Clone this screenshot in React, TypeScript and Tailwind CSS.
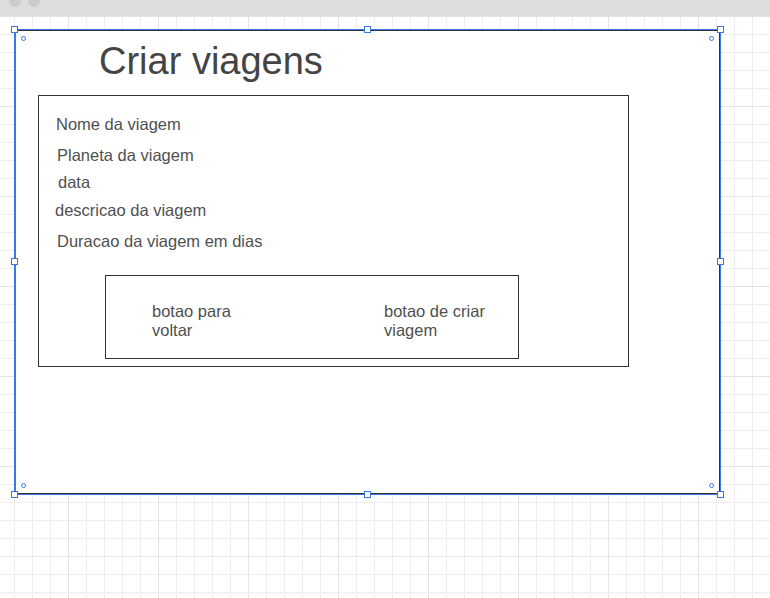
import React from "react";

const Handle = ({ className }: { className: string }) => (
  <div className={`absolute w-[7px] h-[7px] bg-white border border-[#3b78e7] ${className}`} />
);

const Rot = ({ className }: { className: string }) => (
  <div className={`absolute w-[5px] h-[5px] rounded-full bg-white border border-[#3b78e7] ${className}`} />
);

export default function App() {
  return (
    <div className="w-[770px] h-[598px] overflow-hidden bg-white font-['Liberation_Sans',Arial,sans-serif]">
      {/* top bar */}
      <div className="h-[16px] bg-[#dddddd] relative overflow-hidden flex gap-[7px] pl-[9px]">
        <div className="w-[12px] h-[12px] rounded-full bg-[#cccccc] -mt-[5px]" />
        <div className="w-[12px] h-[12px] rounded-full bg-[#cccccc] -mt-[5px]" />
      </div>
      {/* canvas */}
      <div className="h-[582px] pt-[13px] pl-[14px] bg-[image:linear-gradient(to_right,#e3e3e3_1px,transparent_1px),linear-gradient(to_bottom,#e3e3e3_1px,transparent_1px),linear-gradient(to_right,#eeeeee_1px,transparent_1px),linear-gradient(to_bottom,#eeeeee_1px,transparent_1px)] bg-[size:90px_90px,90px_90px,18px_18px,18px_18px] bg-[position:68px_0,0_0,14px_0,0_0]">
        <div className="relative w-[707px] h-[466px] border border-[#3b78e7] bg-white">
          <div className="w-full h-full border-t border-r border-b border-l border-t-[#333333] border-r-[#333333] border-b-[#333333] border-l-[#3b78e7] flex flex-col">
            <div className="h-[64px] pt-[11px] pl-[83px] text-[38px] leading-[38px] text-[#444444]">Criar viagens</div>
            <div className="ml-[22px] w-[591px] h-[272px] border border-[#333333] flex flex-col text-[16.5px] leading-[18px] text-[#505050]">
              <div className="mt-[19px] ml-[17px]">Nome da viagem</div>
              <div className="mt-[13px] ml-[18px]">Planeta da viagem</div>
              <div className="mt-[9px] ml-[19px]">data</div>
              <div className="mt-[10px] ml-[16px]">descricao da viagem</div>
              <div className="mt-[13px] ml-[18px]">Duracao da viagem em dias</div>
              <div className="mt-[25px] ml-[66px] w-[414px] h-[84px] border border-[#333333] flex pl-[46px] pt-[26px] leading-[19px]">
                <div className="w-[232px]">botao para<br />voltar</div>
                <div>botao de criar<br />viagem</div>
              </div>
            </div>
          </div>
          <Handle className="-left-[4px] -top-[4px]" />
          <Handle className="left-[349px] -top-[4px]" />
          <Handle className="-right-[4px] -top-[4px]" />
          <Handle className="-left-[4px] top-[228px]" />
          <Handle className="-right-[4px] top-[228px]" />
          <Handle className="-left-[4px] -bottom-[4px]" />
          <Handle className="left-[349px] -bottom-[4px]" />
          <Handle className="-right-[4px] -bottom-[4px]" />
          <Rot className="left-[6px] top-[6px]" />
          <Rot className="right-[6px] top-[6px]" />
          <Rot className="left-[6px] bottom-[6px]" />
          <Rot className="right-[6px] bottom-[6px]" />
        </div>
      </div>
    </div>
  );
}
